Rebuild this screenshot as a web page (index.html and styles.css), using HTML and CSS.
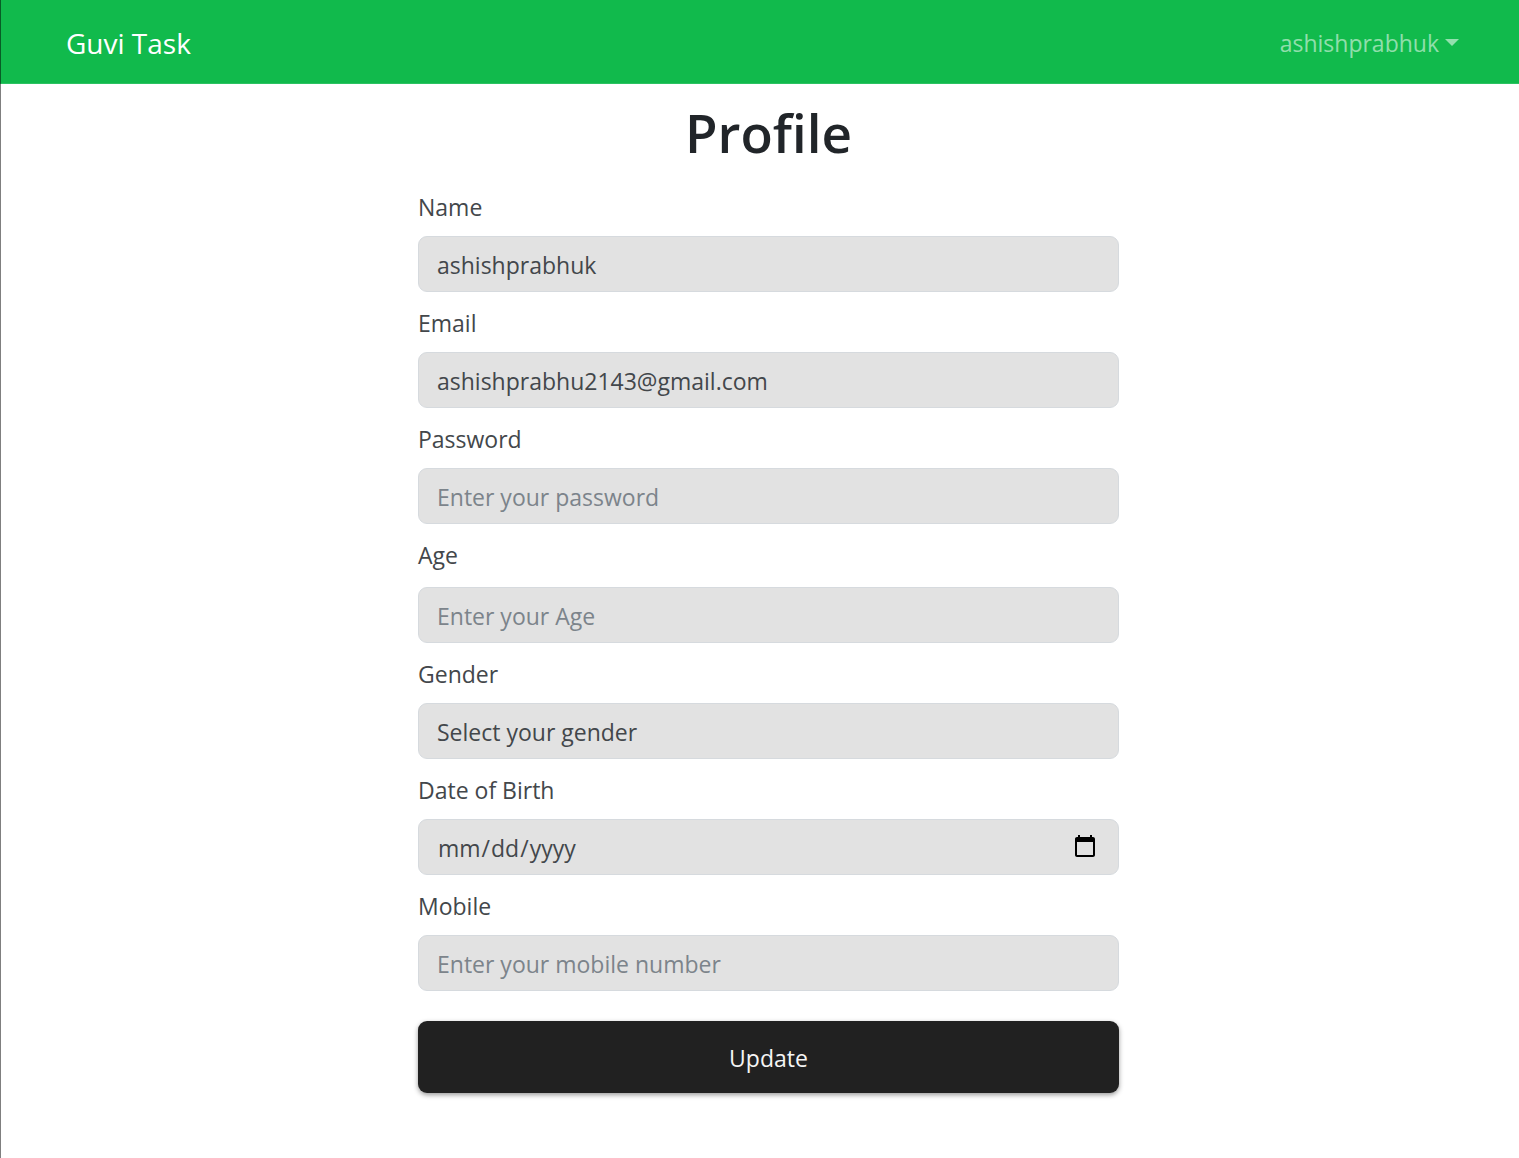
FILE: index.html
```html
<!DOCTYPE html>
<html lang="en">
<head>
<meta charset="utf-8">
<meta name="viewport" content="width=device-width, initial-scale=1">
<title>Profile</title>
<link rel="stylesheet" href="styles.css">
</head>
<body>
<header class="navbar">
  <a class="brand" href="#">Guvi Task</a>
  <button class="user-menu" type="button" aria-haspopup="true">ashishprabhuk<span class="caret"></span></button>
</header>
<main class="content">
  <h1 class="title">Profile</h1>
  <form class="profile-form">
    <div class="field">
      <label for="name">Name</label>
      <input class="control" id="name" type="text" value="ashishprabhuk">
    </div>
    <div class="field">
      <label for="email">Email</label>
      <input class="control" id="email" type="email" value="ashishprabhu2143@gmail.com">
    </div>
    <div class="field">
      <label for="password">Password</label>
      <input class="control" id="password" type="password" placeholder="Enter your password">
    </div>
    <div class="field field-spaced">
      <label for="age">Age</label>
      <input class="control" id="age" type="text" inputmode="numeric" placeholder="Enter your Age">
    </div>
    <div class="field">
      <label for="gender">Gender</label>
      <select class="control" id="gender">
        <option>Select your gender</option>
        <option>Male</option>
        <option>Female</option>
        <option>Other</option>
      </select>
    </div>
    <div class="field">
      <label for="dob">Date of Birth</label>
      <input class="control" id="dob" type="date">
    </div>
    <div class="field">
      <label for="mobile">Mobile</label>
      <input class="control" id="mobile" type="tel" placeholder="Enter your mobile number">
    </div>
    <button class="submit" type="submit">Update</button>
  </form>
</main>
</body>
</html>
```
FILE: styles.css
```css
* {
  box-sizing: border-box;
}

body {
  margin: 0;
  min-height: 100vh;
  position: relative;
  background: #fff;
  color: #212529;
  font-family: "Segoe UI", "Open Sans", "Noto Sans", sans-serif;
  font-size: 23px;
  line-height: 36px;
}

/* window edge, drawn over the bar and the page */
body::before {
  content: "";
  position: absolute;
  inset: 0 auto 0 0;
  width: 1px;
  background: rgba(0, 0, 0, 0.5);
}

.navbar {
  display: flex;
  align-items: center;
  justify-content: space-between;
  min-height: 84px;
  padding: 2px 60px 0 66px;
  background: #11ba4c;
  border-bottom: 1px solid #2cc262;
}

.brand {
  color: #fff;
  font-size: 28px;
  text-decoration: none;
}

.user-menu {
  display: flex;
  align-items: center;
  gap: 6px;
  padding: 0;
  border: 0;
  background: none;
  color: rgba(255, 255, 255, 0.55);
  font: inherit;
}

.caret {
  border: 7px solid transparent;
  border-top-color: currentColor;
  border-bottom: 0;
}

.content {
  padding: 16px 0 64px 18px;
}

.title {
  margin: 0 0 23px;
  font-size: 53px;
  font-weight: 600;
  line-height: 66px;
  text-align: center;
}

.profile-form {
  display: flex;
  flex-direction: column;
  gap: 13px;
  width: 100%;
  max-width: 701px;
  margin: 0 auto;
}

.field {
  display: flex;
  flex-direction: column;
  gap: 11px;
  color: #43474b;
}

.field-spaced {
  gap: 14px;
}

.control {
  width: 100%;
  height: 56px;
  margin: 0;
  padding: 2px 18px 0;
  border: 1px solid #d6dade;
  border-radius: 9px;
  background: #e2e2e2;
  color: #43474b;
  font: inherit;
  appearance: none;
}

.control::placeholder {
  color: #7c848b;
  opacity: 1;
}

.control::-webkit-calendar-picker-indicator {
  width: 26px;
  height: 26px;
  padding: 0 2px 2px 0;
}

.submit {
  height: 72px;
  margin-top: 17px;
  padding: 2px 0 0;
  border: 0;
  border-radius: 9px;
  background: #212121;
  box-shadow: 0 2px 5px rgba(0, 0, 0, 0.4);
  color: #f5f5f5;
  font: inherit;
  font-weight: 500;
}
```
